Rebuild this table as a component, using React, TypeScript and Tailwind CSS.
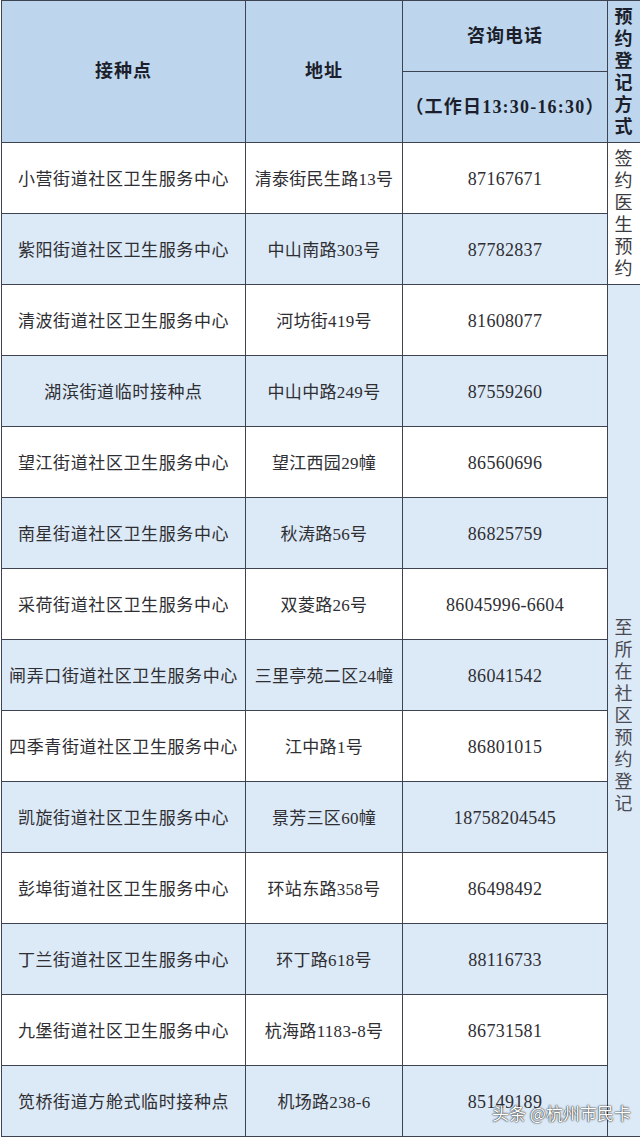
const rows: [string, string, string][] = [
  ["小营街道社区卫生服务中心", "清泰街民生路13号", "87167671"],
  ["紫阳街道社区卫生服务中心", "中山南路303号", "87782837"],
  ["清波街道社区卫生服务中心", "河坊街419号", "81608077"],
  ["湖滨街道临时接种点", "中山中路249号", "87559260"],
  ["望江街道社区卫生服务中心", "望江西园29幢", "86560696"],
  ["南星街道社区卫生服务中心", "秋涛路56号", "86825759"],
  ["采荷街道社区卫生服务中心", "双菱路26号", "86045996-6604"],
  ["闸弄口街道社区卫生服务中心", "三里亭苑二区24幢", "86041542"],
  ["四季青街道社区卫生服务中心", "江中路1号", "86801015"],
  ["凯旋街道社区卫生服务中心", "景芳三区60幢", "18758204545"],
  ["彭埠街道社区卫生服务中心", "环站东路358号", "86498492"],
  ["丁兰街道社区卫生服务中心", "环丁路618号", "88116733"],
  ["九堡街道社区卫生服务中心", "杭海路1183-8号", "86731581"],
  ["笕桥街道方舱式临时接种点", "机场路238-6", "85149189"],
];

function Vertical({ text, className }: { text: string; className?: string }) {
  return (
    <div className={"flex flex-col items-center " + (className ?? "")}>
      {text.split("").map((c, i) => (
        <span key={i} className="leading-[22px]">
          {c}
        </span>
      ))}
    </div>
  );
}

export default function App() {
  const cell = "border border-[#3d4350] text-center align-middle p-0";
  const head = cell + " text-[18px] font-bold text-[#1c1f2b]";
  return (
    <div className="relative w-[640px] h-[1137px] bg-white overflow-hidden font-['Liberation_Serif','Noto_Sans_CJK_SC',serif] text-[#2e2e33]">
      <table className="table-fixed border-collapse w-[641px] ml-[1px]">
        <colgroup>
          <col className="w-[244px]" />
          <col className="w-[157px]" />
          <col className="w-[205px]" />
          <col className="w-[35px]" />
        </colgroup>
        <thead>
          <tr className="h-[71px] bg-[#bdd6ee]">
            <th rowSpan={2} className={head + " tracking-[1px]"}>
              接种点
            </th>
            <th rowSpan={2} className={head + " tracking-[1px]"}>
              地址
            </th>
            <th className={head + " tracking-[1px]"}>咨询电话</th>
            <th rowSpan={2} className={head + " pr-[3px]"}>
              <Vertical text="预约登记方式" />
            </th>
          </tr>
          <tr className="h-[71px] bg-[#bdd6ee]">
            <th className={head + " tracking-[1.2px] whitespace-nowrap"}>（工作日13:30-16:30）</th>
          </tr>
        </thead>
        <tbody>
          {rows.map((r, i) => (
            <tr key={i} className={"h-[71px] " + (i % 2 === 1 ? "bg-[#dce9f6]" : "bg-white")}>
              <td className={cell + " text-[17px] tracking-[0.6px] whitespace-nowrap pt-[3px]"}>{r[0]}</td>
              <td className={cell + " text-[17px] tracking-[0.3px] whitespace-nowrap pt-[3px]"}>{r[1]}</td>
              <td className={cell + " text-[18px] tracking-[0.3px] pt-[3px]"}>{r[2]}</td>
              {i === 0 && (
                <td rowSpan={2} className={cell + " bg-white text-[18px] text-[#3a3a40] pr-[3px]"}>
                  <Vertical text="签约医生预约" />
                </td>
              )}
              {i === 2 && (
                <td
                  rowSpan={12}
                  className={cell + " bg-[#dce9f6] text-[18px] text-[#4a4a52] pr-[3px] pt-[10px]"}
                >
                  <Vertical text="至所在社区预约登记" />
                </td>
              )}
            </tr>
          ))}
        </tbody>
      </table>
      <div className="absolute left-[492px] top-[1102px] whitespace-nowrap text-[17px] leading-[22px] text-white font-['Noto_Sans_CJK_SC',sans-serif] [text-shadow:0_0_2px_rgba(0,0,0,0.8),0_0_1px_rgba(0,0,0,0.9)]">
        头条 @杭州市民卡
      </div>
    </div>
  );
}
